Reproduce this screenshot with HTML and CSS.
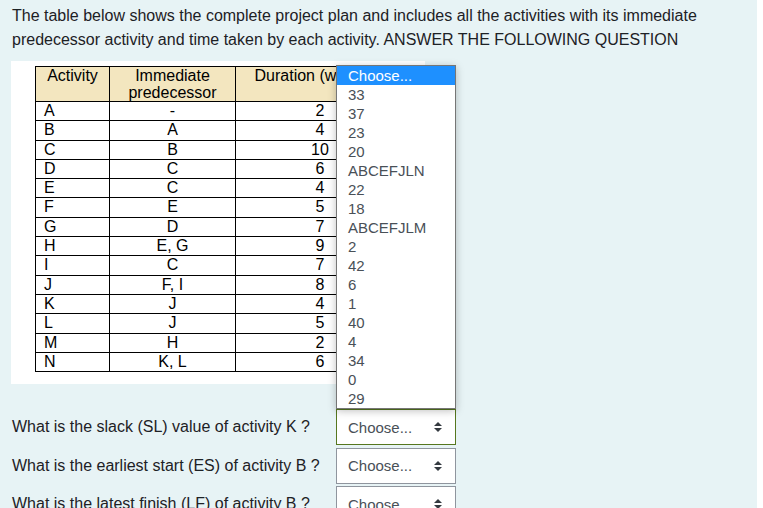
FILE: index.html
```html
<!DOCTYPE html>
<html lang="en">
<head>
  <meta charset="UTF-8">
  <title>Project plan question</title>
  <link rel="stylesheet" href="styles.css">
</head>
<body>
  <div class="formulation">
    <p class="intro">The table below shows the complete project plan and includes all the activities with its immediate predecessor activity and time taken by each activity. ANSWER THE FOLLOWING QUESTION</p>

    <div class="plan">
      <table class="plan-table">
        <thead>
          <tr>
            <th class="col-act">Activity</th>
            <th class="col-pre">Immediate<br>predecessor</th>
            <th class="col-dur">Duration (weeks)</th>
          </tr>
        </thead>
        <tbody>
          <tr><td>A</td><td>-</td><td>2</td></tr>
          <tr><td>B</td><td>A</td><td>4</td></tr>
          <tr><td>C</td><td>B</td><td>10</td></tr>
          <tr><td>D</td><td>C</td><td>6</td></tr>
          <tr><td>E</td><td>C</td><td>4</td></tr>
          <tr><td>F</td><td>E</td><td>5</td></tr>
          <tr><td>G</td><td>D</td><td>7</td></tr>
          <tr><td>H</td><td>E, G</td><td>9</td></tr>
          <tr><td>I</td><td>C</td><td>7</td></tr>
          <tr><td>J</td><td>F, I</td><td>8</td></tr>
          <tr><td>K</td><td>J</td><td>4</td></tr>
          <tr><td>L</td><td>J</td><td>5</td></tr>
          <tr><td>M</td><td>H</td><td>2</td></tr>
          <tr><td>N</td><td>K, L</td><td>6</td></tr>
        </tbody>
      </table>
    </div>

    <div class="questions">
      <div class="question">
        <span class="q-text">What is the slack (SL) value of activity K ?</span>
        <div class="select-wrap">
          <!-- open list of the focused select -->
          <ul class="dropdown">
            <li class="active">Choose...</li>
            <li>33</li>
            <li>37</li>
            <li>23</li>
            <li>20</li>
            <li>ABCEFJLN</li>
            <li>22</li>
            <li>18</li>
            <li>ABCEFJLM</li>
            <li>2</li>
            <li>42</li>
            <li>6</li>
            <li>1</li>
            <li>40</li>
            <li>4</li>
            <li>34</li>
            <li>0</li>
            <li>29</li>
          </ul>
          <div class="select focused">
            <span>Choose...</span>
            <svg class="arrows" width="8" height="10" viewBox="0 0 8 10"><path d="M4 0 L8 4 L0 4 Z M0 6 L8 6 L4 10 Z" fill="#343a40"/></svg>
          </div>
        </div>
      </div>

      <div class="question">
        <span class="q-text">What is the earliest start (ES) of activity B ?</span>
        <div class="select-wrap">
          <div class="select">
            <span>Choose...</span>
            <svg class="arrows" width="8" height="10" viewBox="0 0 8 10"><path d="M4 0 L8 4 L0 4 Z M0 6 L8 6 L4 10 Z" fill="#343a40"/></svg>
          </div>
        </div>
      </div>

      <div class="question">
        <span class="q-text">What is the latest finish (LF) of activity B ?</span>
        <div class="select-wrap">
          <div class="select">
            <span>Choose...</span>
            <svg class="arrows" width="8" height="10" viewBox="0 0 8 10"><path d="M4 0 L8 4 L0 4 Z M0 6 L8 6 L4 10 Z" fill="#343a40"/></svg>
          </div>
        </div>
      </div>
    </div>
  </div>
</body>
</html>
```

FILE: styles.css
```css
body {
  margin: 0;
  padding: 0;
  background-color: #fff;
  font-family: 'Liberation Sans', Arial, sans-serif;
  color: #1d2125;
}
.formulation {
  width: 757px;
  min-height: 100vh;
  box-sizing: border-box;
  padding: 4px 11px 0 11px;
  background-color: #e7f3f5;
}
.intro {
  margin: 0;
  padding-left: 1px;
  font-size: 16px;
  line-height: 24px;
}
.plan {
  width: 414px;
  box-sizing: border-box;
  margin-top: 9px;
  padding: 5px 24px 12px;
  background-color: #fff;
}
.plan-table {
  width: 366px;
  border-collapse: collapse;
  table-layout: fixed;
  font-size: 16px;
  color: #000;
}
.plan-table th,
.plan-table td {
  border: 1px solid #000;
  padding: 0;
  line-height: 18.3px;
  white-space: nowrap;
}
.plan-table th {
  background-color: #f3e6bf;
  font-weight: normal;
  line-height: 17px;
  vertical-align: top;
  text-align: center;
}
.col-act { width: 73px; }
.col-pre { width: 125px; }
.plan-table th.col-dur {
  width: 158px;
  padding-right: 10px;
}
.plan-table td:first-child {
  padding-left: 8px;
  text-align: left;
}
.plan-table td:nth-child(2),
.plan-table td:nth-child(3) {
  text-align: center;
}
.questions {
  margin-top: 25px;
  display: flex;
  flex-direction: column;
  gap: 2.5px;
}
.question {
  display: flex;
  align-items: center;
  height: 36px;
}
.q-text {
  width: 324px;
  padding-left: 1px;
  font-size: 16px;
}
.select-wrap {
  position: relative;
}
.select {
  width: 120px;
  height: 36px;
  box-sizing: border-box;
  border: 1px solid #8f959e;
  background-color: #fff;
  padding: 0 13px 0 11px;
  display: flex;
  align-items: center;
  justify-content: space-between;
  font-size: 15px;
  color: #495057;
}
.select.focused {
  border-color: #56771f;
}
.dropdown {
  position: absolute;
  left: 0;
  bottom: 100%;
  z-index: 2;
  width: 120px;
  box-sizing: border-box;
  margin: 0;
  padding: 0;
  list-style: none;
  border: 1px solid #767676;
  background-color: #fff;
  box-shadow: 0 2px 8px rgba(0, 0, 0, 0.25);
  font-size: 15px;
  color: #495057;
}
.dropdown li {
  height: 19px;
  line-height: 19px;
  padding-left: 11px;
}
.dropdown li.active {
  background-color: #1e90ff;
  color: #fff;
}
```
